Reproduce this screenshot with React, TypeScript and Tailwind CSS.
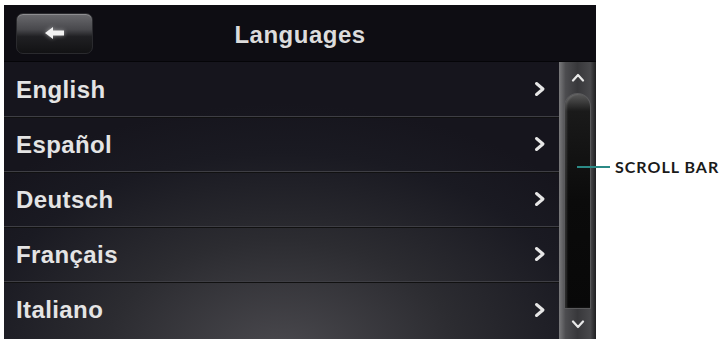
import React from "react";

const LANGS = ["English", "Español", "Deutsch", "Français", "Italiano"];

function BackArrow() {
  return (
    <svg width="22" height="14" viewBox="0 0 22 14" className="drop-shadow-[0_0_2px_rgba(255,255,255,0.5)]">
      <polygon points="1,7 9,1 9,4.5 20,4.5 20,9.5 9,9.5 9,13" fill="#f2f2f2" />
    </svg>
  );
}

function Chevron({ up }: { up: boolean }) {
  return (
    <svg width="14" height="9" viewBox="0 0 14 9">
      <polyline points={up ? "2,7.5 7,2 12,7.5" : "2,1.5 7,7 12,1.5"} fill="none" stroke="#e8e8e8" strokeWidth="2.2" strokeLinecap="round" strokeLinejoin="round" />
    </svg>
  );
}

function RowArrow() {
  return (
    <svg width="12" height="16" viewBox="0 0 12 16">
      <polyline points="2.5,2.5 9,8 2.5,13.5" fill="none" stroke="#e6e6e6" strokeWidth="3" strokeLinecap="round" strokeLinejoin="round" />
    </svg>
  );
}

export default function App() {
  return (
    <div className="w-[723px] h-[342px] bg-white flex pt-[5px] pl-[4px] relative font-['Liberation_Sans',Arial,sans-serif]">
      {/* device screen */}
      <div className="w-[592px] h-[334px] flex flex-col bg-[#0e0d13]">
        <div className="h-[57px] grid grid-cols-[1fr_auto_1fr] items-center bg-[#0e0d13] border-b border-[#050508]">
          <div className="pl-[12px]">
            <div className="w-[77px] h-[41px] rounded-[7px] border border-[#2a2a2e] bg-[linear-gradient(180deg,#6a6a6e_0%,#48484c_40%,#202023_58%,#121214_100%)] shadow-[inset_0_1px_0_rgba(255,255,255,0.25)] flex items-center justify-center">
              <BackArrow />
            </div>
          </div>
          <div className="text-[24px] font-bold text-[#dcdcdc] tracking-[0.5px] pt-[3px]">Languages</div>
          <div />
        </div>
        <div className="flex-1 flex">
          <div className="flex-1 flex flex-col bg-[radial-gradient(ellipse_70%_90%_at_50%_105%,#4a494e_0%,#2c2c31_45%,#1a1a22_80%,#16151d_100%)]">
            {LANGS.map((l, i) => (
              <div
                key={l}
                className={`h-[55px] flex items-center justify-between pl-[12px] pr-[13px] ${i < LANGS.length - 1 ? "border-b border-[#3e3e44] shadow-[0_1px_0_#111]" : ""}`}
              >
                <span className="text-[24px] font-bold text-[#e4e4e4] tracking-[0.4px] pt-[1px]">{l}</span>
                <RowArrow />
              </div>
            ))}
          </div>
          {/* scroll bar */}
          <div className="w-[37px] flex flex-col items-center bg-[linear-gradient(90deg,#7a7a7c_0%,#4c4c4f_18%,#38383b_50%,#48484b_85%,#1e1e20_100%)]">
            <div className="h-[31px] flex items-center justify-center">
              <Chevron up />
            </div>
            <div className="w-[27px] h-[216px] rounded-t-full rounded-b-[14px] border border-[#5a5a5c] bg-[linear-gradient(180deg,#5a5a5a_0%,#1a1a1a_8%,#0b0b0b_50%,#080808_100%)] shadow-[inset_2px_0_2px_rgba(255,255,255,0.15)]" />
            <div className="flex-1 flex items-center justify-center">
              <Chevron up={false} />
            </div>
          </div>
        </div>
      </div>
      {/* callout */}
      <div className="absolute left-[577px] top-[155px] flex items-center gap-[5px]">
        <div className="w-[33px] h-[2px] bg-[#2b8a86]" />
        <span className="text-[16px] font-bold text-[#1a1a1a] font-['Lato',sans-serif] tracking-[1px]">SCROLL BAR</span>
      </div>
    </div>
  );
}
